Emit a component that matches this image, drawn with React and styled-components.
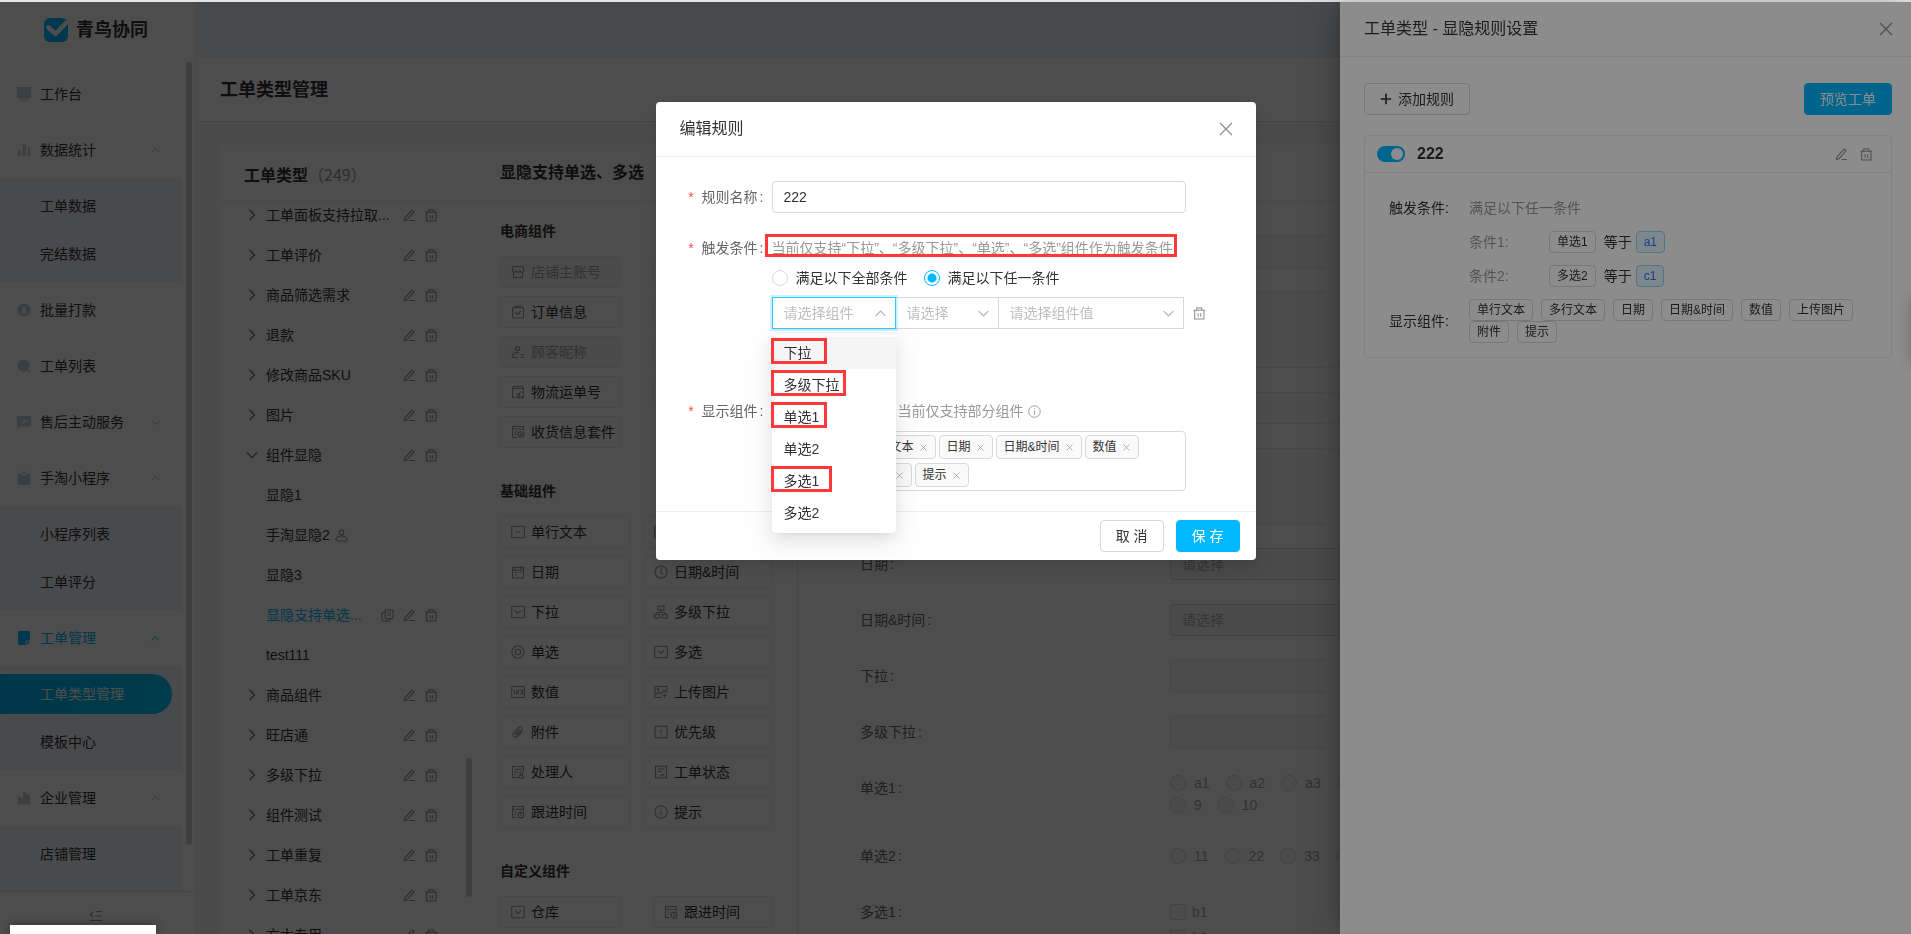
import styled, { createGlobalStyle, css } from "styled-components";

const c = {
    primary: "#00b8ff",
    text: "#333",
    sub: "#666",
    muted: "#999",
    placeholder: "#bfbfbf",
    border: "#d9d9d9",
    line: "#ebebeb",
    tint: "#eef4fa",
    mark: "#ff3838",
};

const MENU = [
    { label: "工作台", icon: "monitor" },
    { label: "数据统计", icon: "bars", open: true, children: ["工单数据", "完结数据"] },
    { label: "批量打款", icon: "yen" },
    { label: "工单列表", icon: "search" },
    { label: "售后主动服务", icon: "chat", open: false },
    { label: "手淘小程序", icon: "clipboard", open: true, children: ["小程序列表", "工单评分"] },
    { label: "工单管理", icon: "note", open: true, active: true, children: ["工单类型管理", "模板中心"] },
    { label: "企业管理", icon: "building", open: true, children: ["店铺管理", "员工管理"] },
];

const TREE = [
    { label: "工单面板支持拉取..." },
    { label: "工单评价" },
    { label: "商品筛选需求" },
    { label: "退款" },
    { label: "修改商品SKU" },
    { label: "图片" },
    { label: "组件显隐", open: true },
    { label: "显隐1", leaf: true },
    { label: "手淘显隐2", leaf: true, user: true },
    { label: "显隐3", leaf: true },
    { label: "显隐支持单选...", leaf: true, active: true },
    { label: "test111", leaf: true },
    { label: "商品组件" },
    { label: "旺店通" },
    { label: "多级下拉" },
    { label: "组件测试" },
    { label: "工单重复" },
    { label: "工单京东" },
    { label: "方太专用" },
];

const LIBRARY = [
    {
        title: "电商组件",
        width: 120,
        items: [
            ["店铺主账号", "shop", true], ["订单编号", "order"],
            ["订单信息", "order"], ["商品信息", "order"],
            ["顾客昵称", "customer", true], ["退款金额", "order"],
            ["物流运单号", "truck"], ["物流公司", "truck"],
            ["收货信息套件", "address"],
        ],
    },
    {
        title: "基础组件",
        width: 130,
        items: [
            ["单行文本", "line"], ["多行文本", "line"],
            ["日期", "calendar"], ["日期&时间", "clock"],
            ["下拉", "select"], ["多级下拉", "cascade"],
            ["单选", "radio"], ["多选", "select"],
            ["数值", "number"], ["上传图片", "image"],
            ["附件", "clip"], ["优先级", "priority"],
            ["处理人", "handler"], ["工单状态", "status"],
            ["跟进时间", "follow"], ["提示", "info"],
        ],
    },
    {
        title: "自定义组件",
        width: 120,
        items: [["仓库", "select"], ["跟进时间", "follow"]],
    },
];

const OPTIONS = [
    { label: "下拉", mark: 56 },
    { label: "多级下拉", mark: 75 },
    { label: "单选1", mark: 56 },
    { label: "单选2" },
    { label: "多选1", mark: 61 },
    { label: "多选2" },
];

const SHOWN = ["单行文本", "多行文本", "日期", "日期&时间", "数值", "上传图片", "附件", "提示"];

const GLYPHS = {
    shop: <path d="M2 1.500h10l.5 4a1.800 1.800 0 0 1-3.600 0a1.800 1.800 0 0 1-3.800 0a1.800 1.800 0 0 1-3.600 0zM2.500 7.500v5h9v-5" />,
    order: <><rect x="1.500" y="2.500" width="11" height="10.500" rx="1" /><path d="M3.500 1.200h7M4.500 7.500l2 2 3.500-3.500" /></>,
    customer: <><circle cx="6.500" cy="3.500" r="2" /><path d="M8 7.500H6c-2.500 0-4.500 1.500-4.500 4 0 .7.500 1 1 1H7M9.500 9.500h3.500M9.500 12h3.500" /></>,
    truck: <><path d="M1.500 12.500v-9l1-2h9l1 2v3M1.500 3.500h11M1.500 12.500h3" /><path d="M6 12V10l1.500-1.500h1V12zM8.500 7h4v5h-4" /><circle cx="7.500" cy="12.500" r=".8" /><circle cx="11.300" cy="12.500" r=".8" /></>,
    address: <><path d="M6 12.500H1.500v-11h11V6M1.500 4h11M3.500 7h3M3.500 9.500h2" /><circle cx="10" cy="9.500" r="2.800" /><circle cx="10" cy="9.500" r=".8" /></>,
    line: <><rect x=".7" y="1.200" width="12.600" height="11.600" rx="1" /><path d="M4.500 7h5" /></>,
    calendar: <><rect x="1.500" y="2.500" width="11" height="10.500" /><path d="M4 1v3M10 1v3M1.500 5.200h11M4 7.500h1.500M6.500 7.500H8M9 7.500h1.500M4 10h1.500" /></>,
    clock: <><circle cx="7" cy="7" r="6" /><path d="M7 3.500V7.500l2 1.500" /></>,
    select: <><rect x=".7" y="1.200" width="12.600" height="11.600" rx="1" /><path d="M4 5.500l3 3 3-3" /></>,
    cascade: <><rect x="4" y="1" width="6" height="4" /><path d="M7 5v2.500M3 9.500v-2h8v2" /><rect x=".7" y="9.500" width="5" height="3.500" /><rect x="8.300" y="9.500" width="5" height="3.500" /></>,
    radio: <><circle cx="7" cy="7" r="6.200" /><circle cx="7" cy="7" r="2.700" /></>,
    number: <><rect x=".7" y="1.500" width="12.600" height="11" rx="1" /><path d="M2.700 5.500h1v3.500M5.500 5.500h2v1.700h-2V9h2.200M9.300 5.500h2V9h-2M9.600 7.200h1.700" /></>,
    image: <><path d="M7.500 12.500H1v-11h12v5" /><circle cx="4" cy="4.300" r=".8" /><path d="M1 10l3.500-3 2.500 2 3-3.500 3 2M10.500 13V9.500M9 11l1.500-1.700L12 11" /></>,
    clip: <path d="M11.500 6l-5 5.200a2.600 2.600 0 0 1-3.900-3.600l5.200-5.400a1.900 1.900 0 0 1 2.800 2.600L6 9.400a.9.900 0 0 1-1.300-1.300L8.500 4.200" />,
    priority: <><rect x="1" y="1.200" width="12" height="11.600" /><path d="M7 4v4M7 9.500v1" /></>,
    handler: <><path d="M7 12.500H1.500v-11h11V6M3.500 4.200h7M3.500 7h3.500M3.500 9.500h2" /><circle cx="10.300" cy="8.200" r="1.400" /><path d="M7.800 13c0-2 1-2.700 2.500-2.700s2.500.7 2.500 2.700z" /></>,
    status: <><rect x="1.500" y="1.200" width="11" height="11.600" /><path d="M4 4h6M4 6.500h4M6.500 9.500L8 11l2.500-2.500" /></>,
    follow: <><path d="M5.500 12.500H1.500v-11h11V6M1.500 4.200h11M3.500 7h2M3.500 9.500h1.500" /><circle cx="10" cy="10" r="2.900" /><path d="M10 8.500V10.200h1.200" /></>,
    info: <><circle cx="7" cy="7" r="6.200" /><path d="M7 3.500v1M7 6v4.500" /></>,
    pencil: <path d="M1.500 12.500l.6-3L9.300 1.800a1.300 1.300 0 0 1 2 1.800L4.500 11.300 1.500 12.500zM7 12.500H13" />,
    trash: <path d="M.5 3.500h12.500M4 3.500V1h5.500v2.500M1.800 3.500v9.500h10V3.500M5.500 6.800v3.700M8.200 6.800v3.700" />,
    copy: <><rect x="4.500" y="1" width="8.500" height="9.500" rx="1" /><path d="M4.500 3.500H2.500a1.500 1.500 0 0 0-1.500 1.500v6.500A1.500 1.500 0 0 0 2.500 13h5.500a1.500 1.500 0 0 0 1.500-1.500v-1M7 4h3.500M7 6.500h3.500" /></>,
    user: <><circle cx="7" cy="3.700" r="2.500" /><path d="M1 11.500c0-2.500 2-4 6-4s6 1.500 6 4c0 .8-.5 1.300-1.300 1.300H2.300C1.500 12.800 1 12.300 1 11.500z" /></>,
    right: <path d="M4 1l6 6-6 6" />,
    down: <path d="M1 4l6 6 6-6" />,
    up: <path d="M1 10l6-6 6 6" />,
    close: <path d="M1 1l12 12M13 1L1 13" />,
    plus: <path d="M7 1v12M1 7h12" />,
    fold: <path d="M4 4L1 6.500 4 9M6.500 3.500H13M6.500 8H13M1 12.500h12" />,
};

const SOLIDS = {
    monitor: <path d="M1 0h12a1 1 0 0 1 1 1v9.500a1 1 0 0 1-1 1H1a1 1 0 0 1-1-1V1a1 1 0 0 1 1-1zM2.500 12.500h9v1.300h-9z" />,
    bars: <path d="M1.500 7h2.200v6H1.500a.5.500 0 0 1-.5-.5v-5a.5.500 0 0 1 .5-.5zM6 1h2.500a.5.500 0 0 1 .5.500V13H5.500V1.500A.5.500 0 0 1 6 1zM10.500 4h2a.5.500 0 0 1 .5.500v8a.5.500 0 0 1-.5.500h-2z" />,
    yen: <><circle cx="7" cy="7" r="6.500" /><path d="M4.800 3.500L7 6.500l2.200-3M7 6.500v4.500M5 7h4M5 9h4" fill="none" stroke="#fff" /></>,
    search: <><circle cx="6.500" cy="6.500" r="6" /><path d="M10.500 11l2.500 2.300" stroke="currentColor" strokeWidth="1.500" /></>,
    chat: <><path d="M1 1h12a1 1 0 0 1 1 1v8.500a1 1 0 0 1-1 1H4L0 14V2a1 1 0 0 1 1-1z" /><path d="M4.500 6l2 2 3.500-3.500" fill="none" stroke="#fff" strokeWidth="1.300" /></>,
    clipboard: <><path d="M1 2h12v12H1z" /><path d="M4.500 0h5v3.500h-5z" stroke="#fff" /></>,
    note: <path d="M2 0h10a1 1 0 0 1 1 1v8.500H9.500a1 1 0 0 0-1 1V14H2a1 1 0 0 1-1-1V1a1 1 0 0 1 1-1zM9.500 10.500H13L9.500 14z" />,
    building: <path d="M1 5l5 2.500V.5l7 4V13.500H1z" />,
};

function Icon({ name, size = 14, weight = 1.1 }) {
    return (
        <svg width={size} height={size} viewBox="0 0 14 14" fill="none" stroke="currentColor" strokeWidth={weight} aria-hidden="true">
            {GLYPHS[name]}
        </svg>
    );
}

function SolidIcon({ name }) {
    return (
        <svg width="14" height="14" viewBox="0 0 14 14" fill="currentColor" aria-hidden="true">
            {SOLIDS[name]}
        </svg>
    );
}

function Sidebar() {
    return (
        <Side>
            <Brand>
                <svg width="24" height="24" viewBox="0 0 24 24" aria-hidden="true">
                    <rect width="24" height="24" rx="6" fill={c.primary} />
                    <path d="M4.500 9.500l7 6.500L22 5" fill="none" stroke="#fff" strokeWidth="4.500" strokeLinecap="round" strokeLinejoin="round" />
                </svg>
                青鸟协同
            </Brand>
            <MenuArea>
                {MENU.map((item) => (
                    <div key={item.label}>
                        <MenuItem href="#" $active={item.active}>
                            <SolidIcon name={item.icon} />
                            <span>{item.label}</span>
                            {item.open !== undefined && <Icon name={item.open ? "up" : "down"} size={9} weight={1.5} />}
                        </MenuItem>
                        {item.children && (
                            <SubMenu>
                                {item.children.map((child) => (
                                    <SubItem key={child} href="#" $active={child === "工单类型管理"}>
                                        {child}
                                    </SubItem>
                                ))}
                            </SubMenu>
                        )}
                    </div>
                ))}
                <Thumb $top="4px" $height="94%" />
            </MenuArea>
            <FoldButton type="button" aria-label="收起菜单">
                <Icon name="fold" />
            </FoldButton>
        </Side>
    );
}

function TypeTree() {
    return (
        <TreePane>
            <TreeList>
                {TREE.map((row) => (
                    <TreeRow key={row.label} $active={row.active}>
                        <Caret>{!row.leaf && <Icon name={row.open ? "down" : "right"} size={12} weight={1.4} />}</Caret>
                        <TreeName>
                            {row.label}
                            {row.user && <Icon name="user" size={13} />}
                        </TreeName>
                        {row.active && <IconButton aria-label="复制"><Icon name="copy" size={13} /></IconButton>}
                        {(!row.leaf || row.active) && (
                            <>
                                <IconButton aria-label="编辑"><Icon name="pencil" size={13} /></IconButton>
                                <IconButton aria-label="删除"><Icon name="trash" size={13} /></IconButton>
                            </>
                        )}
                    </TreeRow>
                ))}
            </TreeList>
            <Thumb $top="76%" $height="19%" />
        </TreePane>
    );
}

function Library() {
    return (
        <LibraryPane>
            {LIBRARY.map((group) => (
                <section key={group.title}>
                    <GroupTitle>{group.title}</GroupTitle>
                    <Cards $width={group.width}>
                        {group.items.map(([label, icon, disabled]) => (
                            <Card key={label} type="button" disabled={disabled}>
                                <Icon name={icon} />
                                {label}
                            </Card>
                        ))}
                    </Cards>
                </section>
            ))}
        </LibraryPane>
    );
}

function Choices({ type, name, items, block }) {
    return (
        <ChoiceGroup $block={block}>
            {items.map((item) => (
                <Choice key={item} $gap={type === "checkbox" ? 6 : 8}>
                    <Tick type={type} name={name} disabled />
                    {item}
                </Choice>
            ))}
        </ChoiceGroup>
    );
}

function Preview() {
    return (
        <PreviewPane>
            <Field><FieldLabel htmlFor="p1">单行文本</FieldLabel><Disabled id="p1" disabled /></Field>
            <Field><FieldLabel htmlFor="p2">多行文本</FieldLabel><Disabled as="textarea" id="p2" $tall disabled /></Field>
            <Field><FieldLabel htmlFor="p3">数值</FieldLabel><Disabled id="p3" disabled /></Field>
            <Field><FieldLabel htmlFor="p4">提示</FieldLabel><Disabled as="textarea" id="p4" $tall disabled /></Field>
            <Field><FieldLabel htmlFor="p5">日期</FieldLabel><Disabled id="p5" $strong placeholder="请选择" disabled /></Field>
            <Field><FieldLabel htmlFor="p6">日期&时间</FieldLabel><Disabled id="p6" $strong placeholder="请选择" disabled /></Field>
            <Field><FieldLabel htmlFor="p7">下拉</FieldLabel><Disabled id="p7" disabled /></Field>
            <Field><FieldLabel htmlFor="p8">多级下拉</FieldLabel><Disabled id="p8" disabled /></Field>
            <Field><FieldLabel as="span">单选1</FieldLabel><Choices type="radio" name="r1" items={["a1", "a2", "a3", "a4", "a5", "a6", "a7", "a8", "9", "10"]} /></Field>
            <Field><FieldLabel as="span">单选2</FieldLabel><Choices type="radio" name="r2" items={["11", "22", "33", "44"]} /></Field>
            <Field><FieldLabel as="span">多选1</FieldLabel><Choices type="checkbox" name="c1" items={["b1", "b2"]} block /></Field>
        </PreviewPane>
    );
}

function RuleDrawer() {
    return (
        <Drawer>
            <DrawerHead>
                <h2>工单类型 - 显隐规则设置</h2>
                <IconButton aria-label="关闭"><Icon name="close" size={14} weight={1.2} /></IconButton>
            </DrawerHead>
            <DrawerBody>
                <DrawerTools>
                    <Button type="button"><Icon name="plus" size={12} weight={2} />添加规则</Button>
                    <Button type="button" $primary>预览工单</Button>
                </DrawerTools>
                <Rule>
                    <RuleHead>
                        <Switch type="checkbox" role="switch" aria-label="启用规则 222" defaultChecked />
                        <strong>222</strong>
                        <IconButton aria-label="编辑"><Icon name="pencil" size={13} /></IconButton>
                        <IconButton aria-label="删除"><Icon name="trash" size={13} /></IconButton>
                    </RuleHead>
                    <RuleBody>
                        <RuleRow>
                            <span>触发条件:</span>
                            <Muted>满足以下任一条件</Muted>
                        </RuleRow>
                        <RuleRow $inset>
                            <Muted>条件1:</Muted>
                            <div><Tag>单选1</Tag><Operator>等于</Operator><Tag $blue>a1</Tag></div>
                        </RuleRow>
                        <RuleRow $inset>
                            <Muted>条件2:</Muted>
                            <div><Tag>多选2</Tag><Operator>等于</Operator><Tag $blue>c1</Tag></div>
                        </RuleRow>
                        <RuleRow>
                            <span>显示组件:</span>
                            <TagWrap>{SHOWN.map((t) => <Tag key={t}>{t}</Tag>)}</TagWrap>
                        </RuleRow>
                    </RuleBody>
                </Rule>
            </DrawerBody>
        </Drawer>
    );
}

function EditModal() {
    return (
        <Modal role="dialog" aria-labelledby="modal-title">
            <ModalHead>
                <h2 id="modal-title">编辑规则</h2>
                <IconButton aria-label="关闭"><Icon name="close" size={14} weight={1.2} /></IconButton>
            </ModalHead>
            <ModalBody>
                <FormRow>
                    <FormLabel as="label" htmlFor="rule-name" $tall>规则名称</FormLabel>
                    <TextInput id="rule-name" defaultValue="222" />
                </FormRow>
                <FormRow $space={71}>
                    <FormLabel>触发条件</FormLabel>
                    <div>
                        <Hint>
                            当前仅支持“下拉”、“多级下拉”、“单选”、“多选”组件作为触发条件
                            <HintMark />
                        </Hint>
                        <RadioLine>
                            <label><Tick type="radio" name="match" />满足以下全部条件</label>
                            <label><Tick type="radio" name="match" defaultChecked />满足以下任一条件</label>
                        </RadioLine>
                        <SelectLine>
                            <SelectBox $width={124} $focus>
                                <select aria-label="组件" defaultValue=""><option value="">请选择组件</option></select>
                                <Icon name="up" size={11} weight={1.4} />
                                <Menu>
                                    {OPTIONS.map((o, i) => (
                                        <Option key={o.label} $hover={i === 0}>
                                            {o.label}
                                            {o.mark && <Mark $width={o.mark} />}
                                        </Option>
                                    ))}
                                </Menu>
                            </SelectBox>
                            <SelectBox $width={104}>
                                <select aria-label="关系" defaultValue=""><option value="">请选择</option></select>
                                <Icon name="down" size={11} weight={1.4} />
                            </SelectBox>
                            <SelectBox $width={186}>
                                <select aria-label="组件值" defaultValue=""><option value="">请选择组件值</option></select>
                                <Icon name="down" size={11} weight={1.4} />
                            </SelectBox>
                            <IconButton aria-label="删除条件"><Icon name="trash" size={13} /></IconButton>
                        </SelectLine>
                    </div>
                </FormRow>
                <FormRow $space={20}>
                    <FormLabel>显示组件</FormLabel>
                    <div>
                        <ShownHint>
                            当前仅支持部分组件
                            <Icon name="info" size={13} weight={1} />
                        </ShownHint>
                        <TagField>
                            {SHOWN.map((t) => (
                                <Chip key={t}>
                                    {t}
                                    <button type="button" aria-label={`移除${t}`}><Icon name="close" size={7} weight={1.5} /></button>
                                </Chip>
                            ))}
                        </TagField>
                    </div>
                </FormRow>
            </ModalBody>
            <ModalFoot>
                <Button type="button">取 消</Button>
                <Button type="button" $primary>保 存</Button>
            </ModalFoot>
        </Modal>
    );
}

export default function App() {
    return (
        <>
            <GlobalStyle />
            <Page>
                <Sidebar />
                <Main>
                    <TopBar />
                    <PageTitle>工单类型管理</PageTitle>
                    <Content>
                        <Panel>
                            <PanelHead>
                                <TreeTitle>工单类型<span>（249）</span></TreeTitle>
                                <h3>显隐支持单选、多选</h3>
                                <HeadActions><SoftButton type="button">显隐规则设置</SoftButton></HeadActions>
                            </PanelHead>
                            <PanelBody>
                                <TypeTree />
                                <Library />
                                <Preview />
                            </PanelBody>
                        </Panel>
                    </Content>
                </Main>
            </Page>
            <Mask />
            <RuleDrawer />
            <SideHandle />
            <Mask />
            <EditModal />
            <StatusBubble />
        </>
    );
}

const GlobalStyle = createGlobalStyle`
  * {
    box-sizing: border-box;
  }

  body {
    margin: 0;
    overflow: hidden;
    background: #fff;
    color: ${c.text};
    font: 14px/22px "Liberation Sans", "Noto Sans CJK SC", sans-serif;
  }

  h1, h2, h3, h4, ul {
    margin: 0;
    padding: 0;
    list-style: none;
  }

  button, input, select, textarea {
    font: inherit;
    color: inherit;
  }

  a {
    color: inherit;
    text-decoration: none;
  }

  svg {
    flex: none;
  }
`;

const Page = styled.div`
  display: flex;
  height: 100vh;
  border-top: 2px solid #e1e5e7;
`;

const Side = styled.aside`
  display: flex;
  flex-direction: column;
  flex: none;
  width: 197px;
  border-right: 1px solid ${c.line};
`;

const Brand = styled.div`
  display: flex;
  align-items: center;
  flex: none;
  gap: 8px;
  height: 56px;
  padding-left: 44px;
  font-size: 18px;
  font-weight: 700;
`;

const MenuArea = styled.nav`
  position: relative;
  flex: 1;
  min-height: 0;
  padding-top: 8px;
  overflow: hidden;
`;

const MenuItem = styled.a`
  display: flex;
  align-items: center;
  gap: 9px;
  height: 56px;
  padding: 0 36px 0 17px;
  color: ${({ $active }) => ($active ? c.primary : c.text)};

  span {
    flex: 1;
  }

  svg {
    color: ${({ $active }) => ($active ? c.primary : "#c6d0da")};
  }

  span + svg {
    color: ${({ $active }) => ($active ? c.primary : "#b0b0b0")};
  }
`;

const SubMenu = styled.div`
  width: 182px;
  padding: 4px 0;
  background: ${c.tint};
`;

const SubItem = styled.a`
  display: block;
  width: 172px;
  height: 40px;
  margin: 4px 0 8px;
  padding-left: 40px;
  border-radius: 0 20px 20px 0;
  line-height: 40px;

  &:last-child {
    margin-bottom: 4px;
  }

  ${({ $active }) =>
      $active &&
      css`
      background: linear-gradient(90deg, #00b4f5, #00c4f0);
      color: #fff;
    `}
`;

const Thumb = styled.div`
  position: absolute;
  top: ${({ $top }) => $top};
  right: 4px;
  width: 6px;
  height: ${({ $height }) => $height};
  border-radius: 3px;
  background: #d0d0d0;
`;

const FoldButton = styled.button`
  display: flex;
  justify-content: center;
  flex: none;
  height: 43px;
  padding: 16px 4px 0 0;
  border: 0;
  border-top: 1px solid #e4e4e4;
  background: none;
  color: ${c.muted};
`;

const Main = styled.main`
  display: flex;
  flex-direction: column;
  flex: 1;
  min-width: 0;
`;

const TopBar = styled.header`
  flex: none;
  height: 56px;
  background: ${c.tint};
`;

const PageTitle = styled.h1`
  flex: none;
  height: 64px;
  padding-left: 23px;
  border-bottom: 1px solid #e4e4e4;
  font-size: 18px;
  line-height: 64px;
`;

const Content = styled.div`
  flex: 1;
  min-height: 0;
  padding: 23px 24px 0 22px;
  background: #f8f8f8;
`;

const Panel = styled.div`
  display: flex;
  flex-direction: column;
  height: 100%;
  background: #fff;
`;

const PanelHead = styled.div`
  display: flex;
  align-items: center;
  flex: none;
  height: 57px;
  border-bottom: 1px solid ${c.line};

  h3 {
    flex: 1;
    padding-left: 24px;
    font-size: 16px;
  }
`;

const TreeTitle = styled.div`
  width: 257px;
  padding: 4px 0 0 25px;
  font-size: 16px;
  font-weight: 700;

  span {
    color: ${c.muted};
    font-family: "Noto Sans CJK SC", sans-serif;
    font-weight: 400;
  }
`;

const HeadActions = styled.div`
  width: 537px;
`;

const SoftButton = styled.button`
  height: 32px;
  padding: 0 12px;
  border: 0;
  border-radius: 8px;
  background: ${c.tint};
`;

const PanelBody = styled.div`
  display: flex;
  flex: 1;
  min-height: 0;
  overflow: hidden;
`;

const TreePane = styled.div`
  position: relative;
  flex: none;
  width: 257px;
  overflow: hidden;
`;

const TreeList = styled.ul`
  margin-top: -7px;
`;

const TreeRow = styled.li`
  display: flex;
  align-items: center;
  gap: 9px;
  height: 40px;
  padding: 0 38px 0 27px;
  color: ${({ $active }) => ($active ? c.primary : c.text)};
`;

const Caret = styled.span`
  display: flex;
  width: 11px;
  color: ${c.sub};
`;

const TreeName = styled.span`
  display: flex;
  align-items: center;
  flex: 1;
  gap: 5px;
  white-space: nowrap;

  svg {
    color: ${c.muted};
  }
`;

const IconButton = styled.button.attrs({ type: "button" })`
  display: flex;
  align-items: center;
  justify-content: center;
  padding: 0;
  border: 0;
  background: none;
  color: #8c8c8c;
`;

const LibraryPane = styled.div`
  flex: none;
  width: 322px;
  padding: 18px 24px 0;
  border-right: 1px solid ${c.line};
  overflow: hidden;
`;

const GroupTitle = styled.h4`
  margin-bottom: 14px;
  font-size: 14px;
`;

const Cards = styled.div`
  display: grid;
  grid-template-columns: repeat(2, ${({ $width }) => $width}px);
  justify-content: space-between;
  row-gap: 8px;
  margin-bottom: 32px;
`;

const Card = styled.button`
  display: flex;
  align-items: center;
  gap: 6px;
  height: 32px;
  padding: 0 0 0 10px;
  border: 1px solid ${c.line};
  border-radius: 4px;
  background: #fff;
  color: ${c.text};
  white-space: nowrap;

  svg {
    color: ${c.muted};
  }

  &:disabled {
    background: #f7f7f7;
    color: #a6a6a6;
  }
`;

const PreviewPane = styled.div`
  flex: 1;
  padding: 34px 24px 0 62px;
  overflow: hidden;
`;

const Field = styled.div`
  display: grid;
  grid-template-columns: 310px minmax(0, 460px);
  margin-bottom: 24px;
  color: ${c.sub};
  line-height: 32px;
`;

const FieldLabel = styled.label`
  &::after {
    content: ":";
    margin-left: 2px;
  }
`;

const Disabled = styled.input`
  display: block;
  width: 100%;
  height: ${({ $tall }) => ($tall ? 76 : 32)}px;
  padding: 0 11px;
  border: 1px solid ${({ $strong }) => ($strong ? c.border : c.line)};
  border-radius: 4px;
  background: ${({ $strong }) => ($strong ? "#f5f5f5" : "#fafafa")};
  resize: none;

  &::placeholder {
    color: #b0b0b0;
  }
`;

const ChoiceGroup = styled.div`
  display: flex;
  flex-wrap: wrap;
  flex-direction: ${({ $block }) => ($block ? "column" : "row")};
  align-content: ${({ $block }) => ($block ? "flex-start" : "center")};
  gap: ${({ $block }) => ($block ? 4 : 0)}px;
  min-height: 32px;
  padding-top: ${({ $block }) => ($block ? 5 : 0)}px;
`;

const Choice = styled.label`
  display: flex;
  align-items: center;
  gap: ${({ $gap }) => $gap}px;
  margin-right: 16px;
  color: #a6a6a6;
  line-height: 22px;
`;

const Tick = styled.input`
  appearance: none;
  width: 16px;
  height: 16px;
  margin: 0;
  border: 1px solid ${c.border};
  border-radius: ${({ type }) => (type === "radio" ? "50%" : "2px")};
  background: #fff;

  &:checked {
    border-color: ${c.primary};
    background: radial-gradient(circle, ${c.primary} 4px, #fff 5px);
  }

  &:disabled {
    background: #f7f7f7;
  }
`;

const Mask = styled.div`
  position: fixed;
  inset: 2px 0 0;
  background: rgba(0, 0, 0, 0.45);
`;

const Drawer = styled.aside`
  position: fixed;
  inset: 2px 0 0 auto;
  width: 571px;
  background: #fff;
  box-shadow: -6px 0 16px -8px rgba(0, 0, 0, 0.2), -9px 0 28px rgba(0, 0, 0, 0.12), -12px 0 48px 16px rgba(0, 0, 0, 0.06);
`;

const DrawerHead = styled.div`
  display: flex;
  align-items: center;
  justify-content: space-between;
  height: 55px;
  padding: 0 18px 0 24px;
  border-bottom: 1px solid ${c.line};

  h2 {
    font-size: 16px;
    font-weight: 400;
  }
`;

const DrawerBody = styled.div`
  padding: 26px 19px 0 24px;
`;

const DrawerTools = styled.div`
  display: flex;
  justify-content: space-between;
  margin-bottom: 20px;
`;

const Button = styled.button`
  display: flex;
  align-items: center;
  gap: 6px;
  height: 32px;
  padding: 0 15px;
  border: 1px solid ${({ $primary }) => ($primary ? c.primary : c.border)};
  border-radius: 4px;
  background: ${({ $primary }) => ($primary ? c.primary : "#fff")};
  color: ${({ $primary }) => ($primary ? "#fff" : c.text)};
`;

const Rule = styled.section`
  border: 1px solid ${c.line};
  border-radius: 4px;
`;

const RuleHead = styled.div`
  display: flex;
  align-items: center;
  gap: 12px;
  height: 37px;
  padding: 0 18px 0 12px;
  border-bottom: 1px solid ${c.line};

  strong {
    flex: 1;
    font-size: 16px;
  }
`;

const Switch = styled.input`
  appearance: none;
  width: 28px;
  height: 16px;
  margin: 0;
  padding: 2px;
  border-radius: 8px;
  background: ${c.primary};

  &::after {
    content: "";
    display: block;
    width: 12px;
    height: 12px;
    margin-left: auto;
    border-radius: 50%;
    background: #fff;
  }
`;

const RuleBody = styled.div`
  padding: 24px 24px 14px;
`;

const RuleRow = styled.div`
  display: grid;
  grid-template-columns: 80px 1fr;
  align-items: center;
  margin-left: ${({ $inset }) => ($inset ? 80 : 0)}px;
  margin-bottom: 12px;

  &:last-child {
    margin-bottom: 0;
  }
`;

const Muted = styled.span`
  color: ${c.muted};
`;

const Operator = styled.span`
  padding-right: 4px;
`;

const TagWrap = styled.div`
  display: flex;
  flex-wrap: wrap;
`;

const Tag = styled.span`
  display: inline-block;
  height: 22px;
  margin-right: 8px;
  padding: 0 7px;
  border: 1px solid ${({ $blue }) => ($blue ? "#91d5ff" : c.border)};
  border-radius: 4px;
  background: ${({ $blue }) => ($blue ? "#e6f7ff" : "#fff")};
  color: ${({ $blue }) => ($blue ? "#2f6fff" : c.text)};
  font-size: 12px;
  line-height: 20px;
  vertical-align: top;
`;

const SideHandle = styled.div`
  position: fixed;
  top: 32%;
  right: -9px;
  width: 8px;
  height: 64px;
  box-shadow: 0 0 14px rgba(0, 0, 0, 0.3);
`;

const Modal = styled.div`
  position: fixed;
  top: 102px;
  left: calc(50% - 300px);
  width: 600px;
  border-radius: 4px;
  background: #fff;
  box-shadow: 0 3px 6px -4px rgba(0, 0, 0, 0.12), 0 6px 16px rgba(0, 0, 0, 0.08), 0 9px 28px 8px rgba(0, 0, 0, 0.05);
`;

const ModalHead = styled.div`
  display: flex;
  align-items: center;
  justify-content: space-between;
  height: 55px;
  padding: 0 23px 0 24px;
  border-bottom: 1px solid #f0f0f0;

  h2 {
    font-size: 16px;
    font-weight: 400;
  }
`;

const ModalBody = styled.div`
  padding: 24px 24px 0;
`;

const FormRow = styled.div`
  display: grid;
  grid-template-columns: 92px 414px;
  margin-bottom: ${({ $space = 24 }) => $space}px;
`;

const FormLabel = styled.span`
  padding-right: 8px;
  color: ${c.sub};
  line-height: ${({ $tall }) => ($tall ? 32 : 22)}px;
  text-align: right;

  &::before {
    content: "*";
    margin-right: 8px;
    color: #ff4d4f;
  }

  &::after {
    content: ":";
    margin-left: 2px;
  }
`;

const TextInput = styled.input`
  height: 32px;
  padding: 0 11px;
  border: 1px solid ${c.border};
  border-radius: 4px;
`;

const Hint = styled.div`
  position: relative;
  color: ${c.muted};
  white-space: nowrap;
`;

const HintMark = styled.span`
  position: absolute;
  inset: -3px 9px 2px -7px;
  border: 3px solid ${c.mark};
`;

const RadioLine = styled.div`
  display: flex;
  gap: 16px;
  margin: 8px 0;

  label {
    display: flex;
    align-items: center;
    gap: 8px;
  }
`;

const SelectLine = styled.div`
  display: flex;
  align-items: center;

  > button {
    margin-left: 9px;
  }
`;

const SelectBox = styled.div`
  position: relative;
  flex: none;
  width: ${({ $width }) => $width}px;
  margin-left: ${({ $focus }) => ($focus ? 0 : -1)}px;

  select {
    appearance: none;
    display: block;
    width: 100%;
    height: 32px;
    padding: 0 11px;
    border: 1px solid ${c.border};
    background: #fff;
    color: ${c.placeholder};
  }

  > svg {
    position: absolute;
    top: 11px;
    right: 10px;
    color: #b0b0b0;
    pointer-events: none;
  }

  ${({ $focus }) =>
      $focus &&
      css`
      z-index: 1;

      select {
        border-color: #33c6ff;
        box-shadow: 0 0 0 2px rgba(0, 184, 255, 0.2);
      }
    `}
`;

const Menu = styled.ul`
  position: absolute;
  top: 36px;
  left: 0;
  width: 100%;
  padding: 4px 0;
  border-radius: 4px;
  background: #fff;
  box-shadow: 0 3px 6px -4px rgba(0, 0, 0, 0.12), 0 6px 16px rgba(0, 0, 0, 0.08), 0 9px 28px 8px rgba(0, 0, 0, 0.05);
`;

const Option = styled.li`
  position: relative;
  padding: 5px 12px;
  background: ${({ $hover }) => ($hover ? "#f5f5f5" : "transparent")};
`;

const Mark = styled.span`
  position: absolute;
  top: 1px;
  left: -1px;
  width: ${({ $width }) => $width}px;
  height: 26px;
  border: 3px solid ${c.mark};
`;

const ShownHint = styled.div`
  display: flex;
  align-items: center;
  gap: 4px;
  margin-bottom: 9px;
  padding-left: 126px;
  color: ${c.muted};
`;

const TagField = styled.div`
  display: flex;
  flex-wrap: wrap;
  gap: 4px 3px;
  padding: 3px 4px;
  border: 1px solid ${c.border};
  border-radius: 4px;
`;

const Chip = styled.span`
  display: flex;
  align-items: center;
  gap: 6px;
  height: 24px;
  padding: 0 8px 0 7px;
  border: 1px solid ${c.border};
  border-radius: 4px;
  background: #fafafa;
  font-size: 12px;

  button {
    display: flex;
    padding: 0;
    border: 0;
    background: none;
    color: ${c.muted};
  }
`;

const ModalFoot = styled.div`
  display: flex;
  justify-content: flex-end;
  gap: 12px;
  padding: 8px 16px;
  border-top: 1px solid #f0f0f0;
`;

const StatusBubble = styled.div`
  position: fixed;
  bottom: 0;
  left: 10px;
  width: 146px;
  height: 9px;
  background: #fff;
  box-shadow: 0 0 8px rgba(0, 0, 0, 0.4);
`;
